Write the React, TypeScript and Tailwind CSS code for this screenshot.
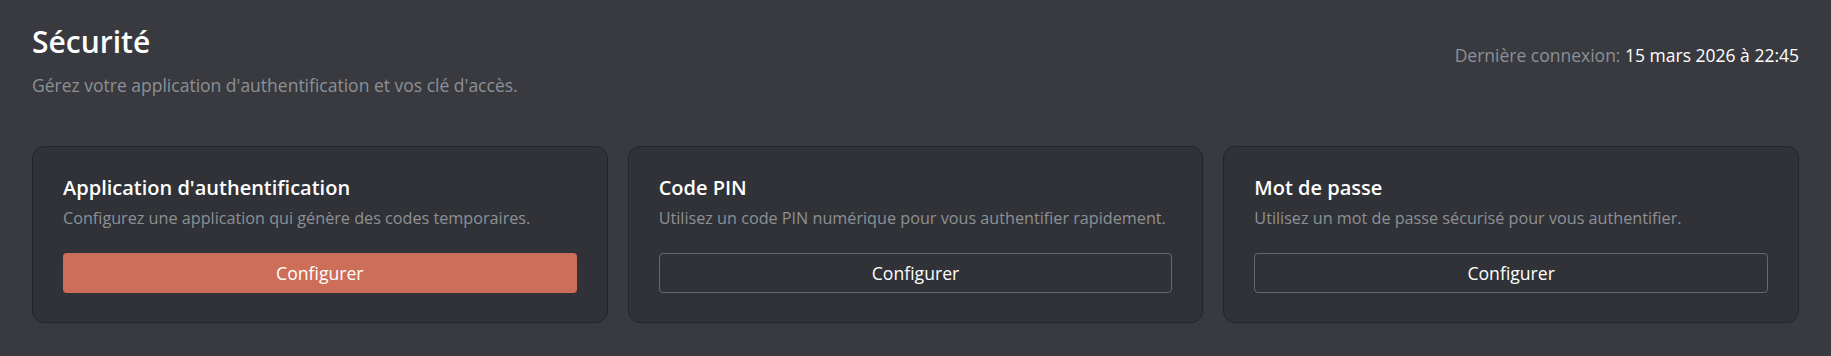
const methods = [
  {
    title: "Application d'authentification",
    description: "Configurez une application qui génère des codes temporaires.",
    primary: true,
  },
  {
    title: "Code PIN",
    description: "Utilisez un code PIN numérique pour vous authentifier rapidement.",
    primary: false,
  },
  {
    title: "Mot de passe",
    description: "Utilisez un mot de passe sécurisé pour vous authentifier.",
    primary: false,
  },
];

function MethodCard({
  title,
  description,
  primary,
}: {
  title: string;
  description: string;
  primary: boolean;
}) {
  return (
    <div className="rounded-xl border border-[#232529] bg-[#303237] px-[30px] pt-[30px] pb-[29px]">
      <h2 className="text-[20px] font-semibold leading-[22px] text-white">{title}</h2>
      <p className="mt-[7px] whitespace-nowrap text-[16.2px] leading-6 text-[#8d9095]">
        {description}
      </p>
      <button
        className={
          primary
            ? "mt-[23px] h-10 w-full rounded bg-[#cd6e58] text-[17.6px] text-white"
            : "mt-[23px] h-10 w-full rounded border border-[#65686d] bg-transparent text-[17.6px] text-white"
        }
      >
        Configurer
      </button>
    </div>
  );
}

export default function App() {
  return (
    <div
      className="min-h-[356px] bg-[#383a3f] px-8 pt-6 pb-8"
      style={{ fontFamily: '"Open Sans", "Noto Sans", sans-serif' }}
    >
      <div className="flex items-start justify-between">
        <div>
          <h1 className="text-3xl font-semibold text-white">Sécurité</h1>
          <p className="mt-3 text-[17.5px] leading-[26px] text-[#8d9095]">
            Gérez votre application d'authentification et vos clé d'accès.
          </p>
        </div>
        <div className="mt-[19px] text-[17.5px] leading-6 text-[#8d9095]">
          Dernière connexion: <span className="text-white">15 mars 2026 à 22:45</span>
        </div>
      </div>

      <div className="mt-12 grid grid-cols-3 gap-5">
        {methods.map((m) => (
          <MethodCard key={m.title} {...m} />
        ))}
      </div>
    </div>
  );
}
